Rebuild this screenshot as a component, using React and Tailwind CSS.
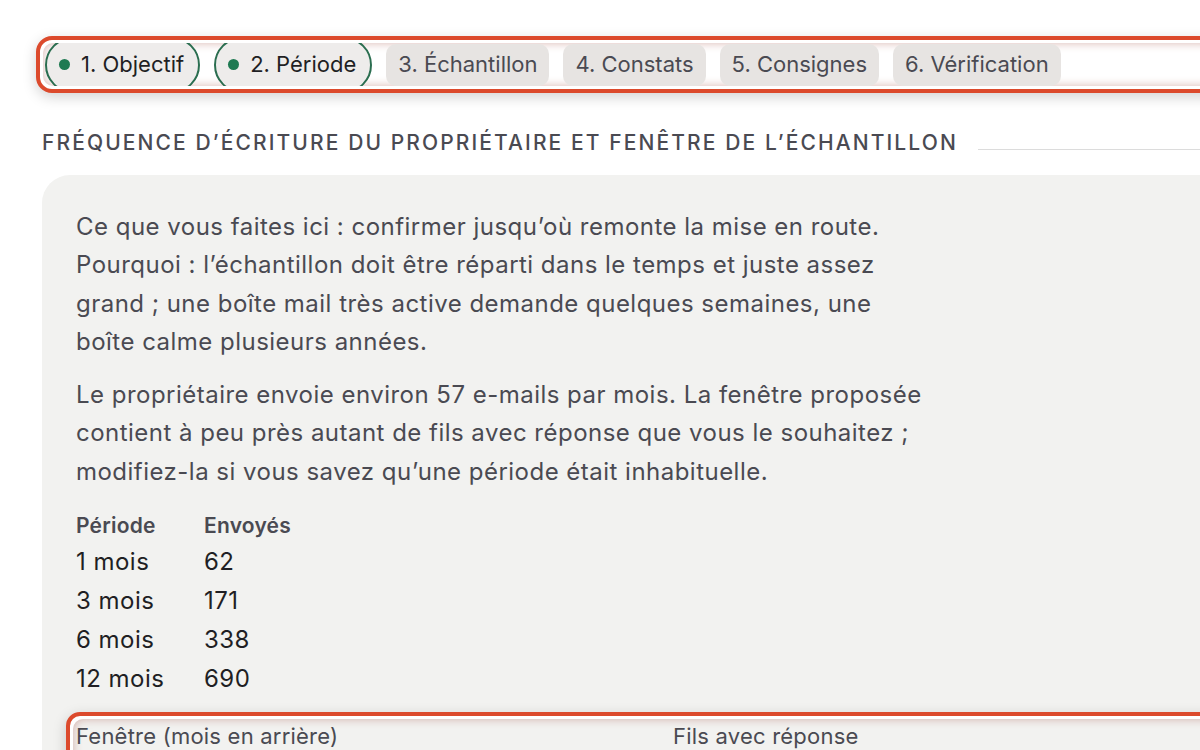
import React from "react";

const steps = [
  { label: "1. Objectif", done: true },
  { label: "2. Période", done: true },
  { label: "3. Échantillon", done: false },
  { label: "4. Constats", done: false },
  { label: "5. Consignes", done: false },
  { label: "6. Vérification", done: false },
];

const rows = [
  ["1 mois", "62"],
  ["3 mois", "171"],
  ["6 mois", "338"],
  ["12 mois", "690"],
];

function StepBar() {
  return (
    <div className="rounded-[16px] border-4 border-[#dc4a2c] bg-white p-[3px] shadow-[0_4px_14px_rgba(0,0,0,0.18)]">
      <div className="flex h-[43px] items-center gap-[14px] overflow-hidden rounded-[10px] pl-[2px] shadow-[inset_0_0_10px_rgba(170,90,80,0.45)]">
        {steps.map((s) =>
          s.done ? (
            <div
              key={s.label}
              className="flex h-[56px] shrink-0 items-center gap-[11px] rounded-full border-2 border-[#2b6e50] bg-[#eeeceb] pl-[12px] pr-[14px] text-[22px] text-[#1f1f24]"
            >
              <span className="h-[11px] w-[11px] rounded-full bg-[#1f7a52]" />
              {s.label}
            </div>
          ) : (
            <div
              key={s.label}
              className="flex h-[42px] shrink-0 items-center rounded-[10px] bg-[#e7e4e2] px-[12px] text-[22px] text-[#4a4a52]"
            >
              {s.label}
            </div>
          )
        )}
      </div>
    </div>
  );
}

export default function App() {
  return (
    <div
      className="min-h-[750px] w-[1200px] overflow-hidden bg-white pl-[36px] pt-[36px]"
      style={{ fontFamily: "Inter, 'Noto Sans', sans-serif" }}
    >
      <div className="w-[1240px]">
        <StepBar />

        <div className="mt-[34px] flex items-center gap-[20px] pl-[6px]">
          <h2 className="shrink-0 text-[21px] font-medium uppercase tracking-[0.1em] text-[#4a4a52]">
            Fréquence d’écriture du propriétaire et fenêtre de l’échantillon
          </h2>
          <div className="mt-[14px] h-px flex-1 bg-[#dcdcdc]" />
        </div>

        <div className="ml-[6px] mt-[16px] rounded-tl-[28px] bg-[#f2f2f0] pl-[34px] pt-[33px] pb-[40px]">
          <div className="max-w-[860px] text-[24px] leading-[38.5px] tracking-[0.02em] text-[#4a4a52]">
            <p>
              Ce que vous faites ici : confirmer jusqu’où remonte la mise en route.
              Pourquoi : l’échantillon doit être réparti dans le temps et juste assez
              grand ; une boîte mail très active demande quelques semaines, une
              boîte calme plusieurs années.
            </p>
            <p className="mt-[14px]">
              Le propriétaire envoie environ 57 e-mails par mois. La fenêtre proposée
              contient à peu près autant de fils avec réponse que vous le souhaitez ;
              modifiez-la si vous savez qu’une période était inhabituelle.
            </p>
          </div>

          <table className="mt-[18px] text-left">
            <thead>
              <tr className="h-[33px] text-[21px] tracking-[0.01em] text-[#4a4a52]">
                <th className="w-[128px] font-semibold">Période</th>
                <th className="font-semibold">Envoyés</th>
              </tr>
            </thead>
            <tbody className="text-[24px] tracking-[0.02em] text-[#1f1f24]">
              {rows.map(([p, n]) => (
                <tr key={p} className="h-[39px]">
                  <td>{p}</td>
                  <td>{n}</td>
                </tr>
              ))}
            </tbody>
          </table>

          <div className="-ml-[10px] mt-[14px] rounded-[14px] border-4 border-[#dc4a2c] bg-white p-[3px] shadow-[0_4px_14px_rgba(0,0,0,0.18)]">
            <div className="grid grid-cols-[597px_1fr] rounded-[10px] bg-[#f2f2f0] pb-[20px] pl-[3px] pt-[1px] text-[22px] tracking-[0.01em] text-[#4a4a52] shadow-[inset_0_0_10px_rgba(170,90,80,0.45)]">
              <div>Fenêtre (mois en arrière)</div>
              <div>Fils avec réponse</div>
            </div>
          </div>
        </div>
      </div>
    </div>
  );
}
